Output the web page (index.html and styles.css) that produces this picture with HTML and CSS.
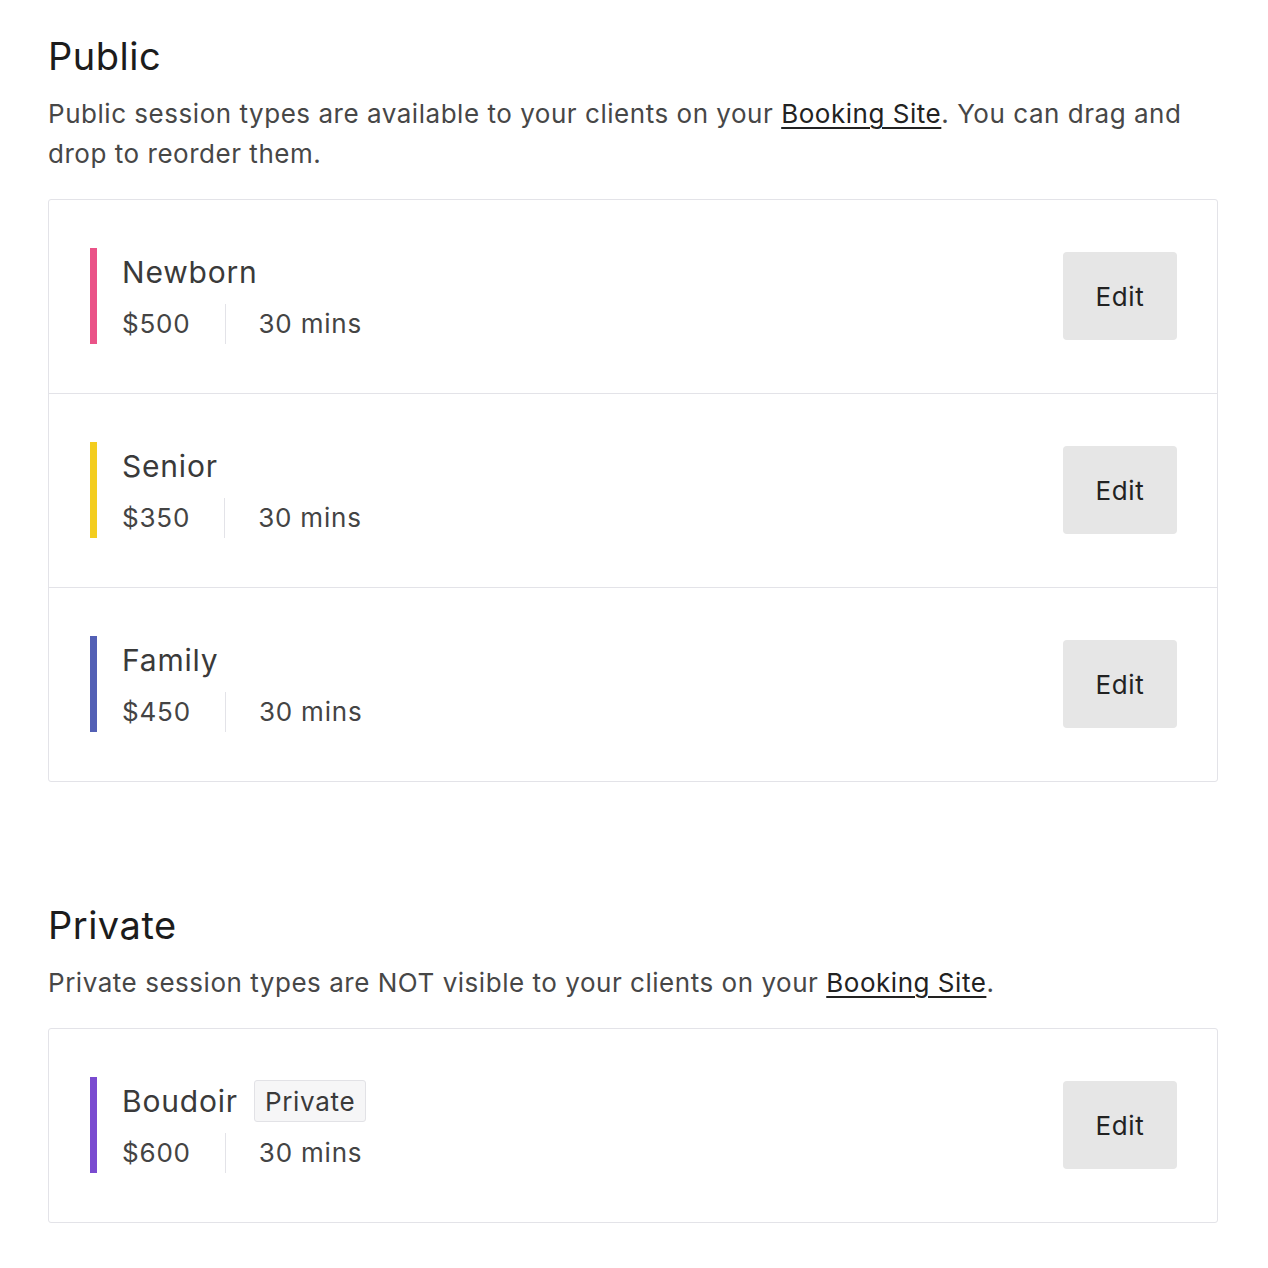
FILE: index.html
```html
<!DOCTYPE html>
<html lang="en">
<head>
<meta charset="utf-8">
<title>Session Types</title>
<link rel="stylesheet" href="styles.css">
</head>
<body>
<main class="page">
  <section class="section">
    <h2 class="section-title">Public</h2>
    <p class="section-desc">Public session types are available to your clients on your <a class="link" href="#">Booking Site</a>. You can drag and drop to reorder them.</p>
    <div class="card">
      <div class="row">
        <div class="info">
          <span class="bar bar-pink"></span>
          <div class="details">
            <div class="name-line"><span class="name">Newborn</span></div>
            <div class="meta"><span class="price">$500</span><span class="sep"></span><span class="duration">30 mins</span></div>
          </div>
        </div>
        <button class="edit-btn" type="button">Edit</button>
      </div>
      <div class="row">
        <div class="info">
          <span class="bar bar-yellow"></span>
          <div class="details">
            <div class="name-line"><span class="name">Senior</span></div>
            <div class="meta"><span class="price">$350</span><span class="sep"></span><span class="duration">30 mins</span></div>
          </div>
        </div>
        <button class="edit-btn" type="button">Edit</button>
      </div>
      <div class="row">
        <div class="info">
          <span class="bar bar-blue"></span>
          <div class="details">
            <div class="name-line"><span class="name">Family</span></div>
            <div class="meta"><span class="price">$450</span><span class="sep"></span><span class="duration">30 mins</span></div>
          </div>
        </div>
        <button class="edit-btn" type="button">Edit</button>
      </div>
    </div>
  </section>
  <section class="section section-private">
    <h2 class="section-title">Private</h2>
    <p class="section-desc">Private session types are NOT visible to your clients on your <a class="link" href="#">Booking Site</a>.</p>
    <div class="card">
      <div class="row">
        <div class="info">
          <span class="bar bar-purple"></span>
          <div class="details">
            <div class="name-line"><span class="name">Boudoir</span><span class="badge">Private</span></div>
            <div class="meta"><span class="price">$600</span><span class="sep"></span><span class="duration">30 mins</span></div>
          </div>
        </div>
        <button class="edit-btn" type="button">Edit</button>
      </div>
    </div>
  </section>
</main>
</body>
</html>
```

FILE: styles.css
```css
* { box-sizing: border-box; }

html, body {
  margin: 0;
  padding: 0;
  background: #ffffff;
}

body {
  font-family: Inter, "Helvetica Neue", Arial, sans-serif;
  color: #444444;
}

.page {
  padding: 32px 50px 40px 48px;
  width: 1268px;
}

.section-private {
  margin-top: 119px;
}

.section-title {
  margin: 0 0 14px;
  font-size: 38px;
  line-height: 48px;
  font-weight: 400;
  color: #1c1c1c;
  letter-spacing: 0.5px;
}

.section-desc {
  margin: 0 0 25px;
  font-size: 26px;
  line-height: 40px;
  color: #474747;
  letter-spacing: 0.53px;
}

.link {
  color: #222222;
  text-decoration: underline;
  text-underline-offset: 4px;
  text-decoration-thickness: 1.5px;
}

.card {
  border: 1px solid #e3e3e8;
  border-radius: 3px;
  width: 1170px;
}

.row {
  display: flex;
  align-items: center;
  justify-content: space-between;
  padding: 48px 40px 49px 41px;
}

.row + .row {
  border-top: 1px solid #e3e3e8;
}

.info {
  display: flex;
  align-items: stretch;
}

.bar {
  width: 7px;
  flex: none;
  margin-right: 25px;
}

.bar-pink { background: #ea5388; }
.bar-yellow { background: #f3cd1f; }
.bar-blue { background: #5360b5; }
.bar-purple { background: #7a4bd0; }

.details {
  display: flex;
  flex-direction: column;
}

.name-line {
  display: flex;
  align-items: center;
  height: 48px;
  margin-bottom: 8px;
}

.name {
  font-size: 30px;
  line-height: 48px;
  color: #3a3a3a;
  letter-spacing: 0.8px;
}

.badge {
  margin-left: 16px;
  height: 42px;
  padding: 0 10px;
  display: inline-flex;
  align-items: center;
  font-size: 26px;
  color: #3a3a3a;
  background: #f6f6f7;
  border: 1px solid #e2e2e6;
  border-radius: 3px;
  letter-spacing: 0.7px;
}

.meta {
  display: flex;
  align-items: stretch;
  height: 40px;
  font-size: 26px;
  line-height: 40px;
  color: #444444;
  letter-spacing: 0.8px;
}

.sep {
  width: 1px;
  background: #e3e3e8;
  margin: 0 33px 0 34px;
}

.edit-btn {
  width: 114px;
  height: 88px;
  border: none;
  border-radius: 4px;
  background: #e6e6e6;
  font-family: inherit;
  font-size: 26px;
  color: #222222;
  letter-spacing: 0.6px;
  cursor: pointer;
  padding: 0;
}
```
